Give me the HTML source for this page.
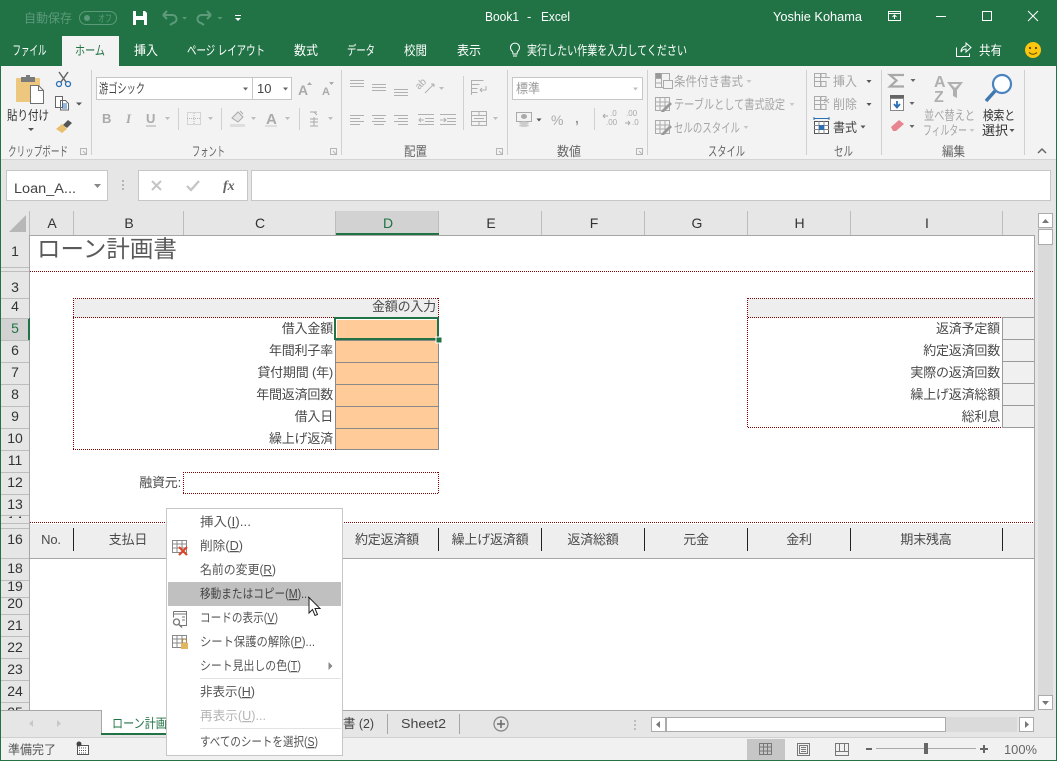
<!DOCTYPE html>
<html lang="ja"><head><meta charset="utf-8"><title>Book1 - Excel</title>
<style>
html,body{margin:0;padding:0;background:#e6e6e6;width:1057px;height:761px;overflow:hidden}
svg{display:block;font-family:"Liberation Sans","Noto Sans CJK JP",sans-serif}
text{white-space:pre}
.w{fill:#fff}.c{text-anchor:middle}.e{text-anchor:end}
.r{fill:#a6a6a6}
.h{font-size:14px;fill:#333;text-anchor:middle}
.s{font-size:13px;letter-spacing:-.2px;fill:#4a4a4a}
.m{font-size:12.500px;fill:#555}
.ar{fill:#8a8a8a}
.dot{stroke:#800000;stroke-dasharray:1 1;fill:none}
</style></head><body>
<svg width="1057" height="761" viewBox="0 0 1057 761" xmlns="http://www.w3.org/2000/svg">
<defs>
<clipPath id="c14"><rect x="1" y="516" width="28" height="2"/></clipPath>
<clipPath id="c25"><rect x="1" y="703" width="28" height="7"/></clipPath>
</defs>

<!-- base -->
<rect width="1057" height="761" fill="#e6e6e6"/>
<!-- title bar -->
<rect width="1057" height="66" fill="#217346"/>
<text x="24" y="22.500" font-size="12.500" fill="#5c9a79" textLength="48" lengthAdjust="spacingAndGlyphs">自動保存</text>
<rect x="79.500" y="11.500" width="37" height="13" rx="6.500" fill="none" stroke="#5c9a79"/>
<circle cx="87" cy="18" r="3" fill="#5c9a79"/>
<text x="98" y="22" font-size="10" fill="#5c9a79" textLength="14" lengthAdjust="spacingAndGlyphs">オフ</text>
<path d="M133 11h12l2 2v12h-14z" fill="#fff"/><rect x="136" y="11" width="7" height="5" fill="#217346"/><rect x="136" y="20" width="8" height="5" fill="#217346"/>
<path d="M163 15l4-4M163 15l4 4M163 15h9a4 4 0 0 1 1 8l-3 2" fill="none" stroke="#5c9a79" stroke-width="2"/>
<path d="M182 17h5l-2.500 2.500z" fill="#5c9a79"/>
<path d="M211 15l-4-4M211 15l-4 4M211 15h-9a4 4 0 0 0-1 8l3 2" fill="none" stroke="#5c9a79" stroke-width="2"/>
<path d="M217.500 17h5l-2.500 2.500z" fill="#5c9a79"/>
<rect x="235" y="15" width="6" height="1" fill="#fff"/><path d="M235 18h6l-3 3z" fill="#fff"/>
<text x="485" y="21" font-size="13" class="w" textLength="34" lengthAdjust="spacingAndGlyphs">Book1</text>
<text x="527" y="21" font-size="13" class="w">-</text>
<text x="541" y="21" font-size="13" class="w" textLength="29" lengthAdjust="spacingAndGlyphs">Excel</text>
<text x="773" y="21" font-size="13" class="w" textLength="89" lengthAdjust="spacingAndGlyphs">Yoshie Kohama</text>
<path d="M888.500 11.500h12v9h-12zM888.500 13.500h12M894.500 19v-4M892.500 17l2-2 2 2" fill="none" stroke="#fff"/>
<rect x="936" y="16" width="10" height="1" fill="#fff"/>
<rect x="982.500" y="11.500" width="9" height="9" fill="none" stroke="#fff"/>
<path d="M1028 11l10 10M1038 11l-10 10" stroke="#fff" fill="none"/>

<!-- tabs -->
<rect x="62" y="36" width="57" height="30" fill="#f3f3f3"/>
<g font-size="13" class="w">
<text x="12.500" y="55" textLength="34" lengthAdjust="spacingAndGlyphs">ファイル</text>
<text x="134" y="55" textLength="24" lengthAdjust="spacingAndGlyphs">挿入</text>
<text x="187" y="55" textLength="78" lengthAdjust="spacingAndGlyphs">ページ レイアウト</text>
<text x="294" y="55" textLength="24" lengthAdjust="spacingAndGlyphs">数式</text>
<text x="347" y="55" textLength="28" lengthAdjust="spacingAndGlyphs">データ</text>
<text x="404" y="55" textLength="23" lengthAdjust="spacingAndGlyphs">校閲</text>
<text x="457" y="55" textLength="24" lengthAdjust="spacingAndGlyphs">表示</text>
<text x="527" y="55" textLength="160" lengthAdjust="spacingAndGlyphs">実行したい作業を入力してください</text>
<text x="979" y="55" textLength="23" lengthAdjust="spacingAndGlyphs">共有</text>
</g>
<text x="75" y="55" font-size="13" fill="#217346" textLength="30" lengthAdjust="spacingAndGlyphs">ホーム</text>
<path d="M512 51a4.500 4.500 0 1 1 6 0c-1 1-1 2-1 3h-4c0-1 0-2-1-3zM513 56h4" fill="none" stroke="#fff"/>
<path d="M956.500 47.500v9h13v-3M961 52c0-4 3-6 5-6v-3l5 4.500-5 4.500v-3c-2 0-4 1-5 3z" fill="none" stroke="#fff"/>
<circle cx="1033" cy="50" r="8" fill="#fcc60e"/><circle cx="1030" cy="48" r="1.100" fill="#5a4a00"/><circle cx="1036" cy="48" r="1.100" fill="#5a4a00"/><path d="M1029 52.500q4 3.500 8 0" fill="none" stroke="#5a4a00"/>

<!-- ribbon -->
<rect x="1" y="66" width="1055" height="93" fill="#f3f3f3"/>
<rect x="1" y="159" width="1055" height="1" fill="#d4d4d4"/>
<g fill="#d0d0d0">
<rect x="91" y="70" width="1" height="85"/><rect x="341" y="70" width="1" height="85"/><rect x="507" y="70" width="1" height="85"/><rect x="647" y="70" width="1" height="85"/><rect x="806" y="70" width="1" height="85"/><rect x="881" y="70" width="1" height="85"/><rect x="1024" y="70" width="1" height="85"/>
<rect x="178" y="108" width="1" height="22"/><rect x="221" y="108" width="1" height="22"/><rect x="299" y="108" width="1" height="22"/><rect x="463" y="76" width="1" height="54"/><rect x="594" y="108" width="1" height="22"/>
</g>
<!-- group labels -->
<g font-size="13" fill="#666">
<text x="8" y="156" textLength="60" lengthAdjust="spacingAndGlyphs">クリップボード</text>
<text x="192" y="156" textLength="33" lengthAdjust="spacingAndGlyphs">フォント</text>
<text x="404" y="156" textLength="23" lengthAdjust="spacingAndGlyphs">配置</text>
<text x="557" y="156" textLength="24" lengthAdjust="spacingAndGlyphs">数値</text>
<text x="708" y="156" textLength="37" lengthAdjust="spacingAndGlyphs">スタイル</text>
<text x="834" y="156" textLength="19" lengthAdjust="spacingAndGlyphs">セル</text>
<text x="942" y="156" textLength="23" lengthAdjust="spacingAndGlyphs">編集</text>
</g>
<g fill="none" stroke="#b5b5b5"><path d="M80.500 154.500v-6h6v6zM83 151l3 3"/><path d="M330.500 154.500v-6h6v6zM333 151l3 3"/><path d="M496.500 154.500v-6h6v6zM499 151l3 3"/><path d="M636.500 154.500v-6h6v6zM639 151l3 3"/></g>
<path d="M1038 153l4-4 4 4" fill="none" stroke="#666" stroke-width="1.500"/>

<!-- clipboard -->
<rect x="16" y="78" width="24" height="24" rx="1" fill="#eec77f"/>
<rect x="21" y="77" width="14" height="5" fill="#7b7b7b"/><rect x="26" y="75" width="4" height="3" fill="#7b7b7b"/>
<path d="M30.500 85.500h8l5 5v13h-13z" fill="#fff" stroke="#707070"/>
<path d="M38.500 85.500v5h5" fill="none" stroke="#707070"/>
<text x="7" y="120" font-size="13" fill="#333" textLength="42" lengthAdjust="spacingAndGlyphs">貼り付け</text>
<path d="M28 128h6l-3 3z" fill="#555"/>
<path d="M59 72l7 10M68 72l-7 10" stroke="#666" stroke-width="1.500" fill="none"/>
<circle cx="59" cy="84" r="2.500" fill="none" stroke="#2c6fb5" stroke-width="1.300"/><circle cx="68" cy="84" r="2.500" fill="none" stroke="#2c6fb5" stroke-width="1.300"/>
<path d="M55.500 96.500h7v11h-7zM60.500 100.500h5l3 3v6.500h-8z" fill="#fff" stroke="#666"/>
<path d="M62 104h5M62 106h5M62 108h5" stroke="#2c6fb5"/>
<path d="M76 102.500h6l-3 3z" fill="#555"/>
<path d="M68 120l4 3-5 5-4-3z" fill="#555"/><path d="M62 124l5 5-5 4-6-4z" fill="#e8c070"/>

<!-- font -->
<rect x="96.500" y="77.500" width="195" height="22" fill="#fff" stroke="#c6c6c6"/>
<rect x="252" y="78" width="1" height="21" fill="#c6c6c6"/>
<text x="99" y="93" font-size="13" fill="#444" textLength="46" lengthAdjust="spacingAndGlyphs">游ゴシック</text>
<path d="M243 87.500h5l-2.500 3zM283 87.500h5l-2.500 3z" fill="#666"/>
<text x="257" y="93" font-size="13" fill="#444">10</text>
<g fill="#aaa" font-weight="bold">
<text x="298" y="95" font-size="14">A</text><text x="322" y="95" font-size="11">A</text>
<text x="102" y="123" font-size="13">B</text><text x="126" y="123" font-size="13" font-style="italic" font-family="Liberation Serif">I</text><text x="146" y="123" font-size="13">U</text>
<text x="266" y="124" font-size="15">A</text>
</g>
<path d="M307 85l2.500-3 2.500 3zM329 82h5l-2.500 3z" fill="#aaa"/>
<rect x="146" y="125.500" width="10" height="1" fill="#aaa"/>
<g style="fill:#bdbdbd"><path d="M165 117h5l-2.500 3zM208 117h5l-2.500 3zM251 117h5l-2.500 3zM285 117h5l-2.500 3zM328 117h5l-2.500 3zM439 87h5l-2.500 3zM493 117h5l-2.500 3z"/></g>
<rect x="187.500" y="112.500" width="13" height="12" fill="none" stroke="#b5b5b5" stroke-dasharray="1 1"/><path d="M194 113v12M187 118.500h13" stroke="#b5b5b5" stroke-dasharray="1 1"/>
<path d="M232 118l6-6 5 5-5 5zM240 111l3 3" fill="#e6e6e6" stroke="#aaa"/><rect x="230" y="124" width="15" height="3" fill="#dedede"/>
<rect x="265" y="125" width="12" height="2" fill="#dedede"/>
<path d="M310 112h7M314 112l3 3M310 119h8M314 117v9M310 122h8M310 126h8" fill="none" stroke="#aaa"/>

<!-- alignment -->
<g stroke="#b0b0b0" fill="none">
<path d="M350 80.500h14M350 83.500h14M350 86.500h14"/>
<path d="M372 84.500h14M372 87.500h14M372 90.500h14"/>
<path d="M394 89.500h14M394 92.500h14M394 95.500h14"/>
<path d="M425 93l9-9M434 84h-3M434 84v3"/>
<path d="M350 115.500h14M350 118.500h10M350 121.500h14M350 124.500h10"/>
<path d="M372 115.500h14M374 118.500h10M372 121.500h14M374 124.500h10"/>
<path d="M394 115.500h14M398 118.500h10M394 121.500h14M398 124.500h10"/>
<path d="M418 114.500h16M425 118.500h9M425 121.500h9M418 124.500h16M424 120h-5M421 118l-2 2 2 2"/>
<path d="M440 114.500h16M447 118.500h9M447 121.500h9M440 124.500h16M440 120h6M444 118l2 2-2 2"/>
<path d="M471.500 80.500h12M471.500 84.500h8M471.500 88.500h6M471.500 92.500h6M471.500 80v15M480 90h6v-4M480 90l2-2M480 90l2 2"/>
<path d="M471.500 111.500h15v14h-15zM471.500 115.500h15M471.500 121.500h15M479 111v4M479 121v4M474 118.500h10"/>
</g>
<text transform="translate(419 90) rotate(-45)" font-size="10" fill="#aaa">ab</text>

<!-- number -->
<rect x="512.500" y="77.500" width="130" height="22" fill="#fff" stroke="#c6c6c6"/>
<text x="516" y="93" font-size="13" fill="#999" textLength="24" lengthAdjust="spacingAndGlyphs">標準</text>
<path d="M633 87.500h5l-2.500 3z" fill="#c0c0c0"/>
<rect x="516.500" y="112.500" width="15" height="9" fill="none" stroke="#aaa"/><ellipse cx="524" cy="116.500" rx="3" ry="2.500" fill="#aaa"/><ellipse cx="524" cy="123" rx="5" ry="1.500" fill="#ccc"/><ellipse cx="524" cy="125.500" rx="5" ry="1.500" fill="#ccc"/>
<path d="M536.500 118.500h5l-2.500 3z" fill="#555"/>
<text x="551" y="125" font-size="14" fill="#aaa">%</text>
<text x="575" y="123" font-size="14" fill="#999" font-weight="bold">,</text>
<g font-size="8" fill="#aaa"><text x="610" y="116">.0</text><text x="606" y="125">.00</text><text x="626" y="116">.00</text><text x="632" y="125">.0</text></g>
<path d="M603 116h5M603 116l2-2M603 116l2 2M625 123h5M630 123l-2-2M630 123l-2 2" stroke="#aaa" fill="none"/>

<!-- styles -->
<g class="r" font-size="13">
<text x="674" y="86" textLength="69" lengthAdjust="spacingAndGlyphs">条件付き書式</text>
<text x="674" y="109" textLength="111" lengthAdjust="spacingAndGlyphs">テーブルとして書式設定</text>
<text x="674" y="132.500" textLength="66" lengthAdjust="spacingAndGlyphs">セルのスタイル</text>
<text x="833" y="86" textLength="24" lengthAdjust="spacingAndGlyphs">挿入</text>
<text x="833" y="109" textLength="24" lengthAdjust="spacingAndGlyphs">削除</text>
<text x="924" y="120" textLength="51" lengthAdjust="spacingAndGlyphs">並べ替えと</text>
<text x="923" y="135" textLength="44" lengthAdjust="spacingAndGlyphs">フィルター</text>
</g>
<path d="M746.500 80h5l-2.500 3zM789.500 103h5l-2.500 3zM743.500 126h5l-2.500 3zM969.500 129h5l-2.500 3z" fill="#c8c8c8"/>
<g stroke="#aaa" fill="none">
<path d="M655.500 73.500h14v14h-14zM655.500 78.500h6M655.500 83h6M661.500 73.500v14" /><rect x="663.500" y="80.500" width="9" height="8" fill="#f3f3f3"/>
<path d="M655.500 97.500h14v13h-14zM655.500 102h14M655.500 106h14M660 97.500v13M665 97.500v13"/>
<path d="M655.500 120.500h14v13h-14zM655.500 125h14M655.500 129h14M660 120.500v13M665 120.500v13"/>
</g>
<rect x="656" y="73" width="5" height="5" fill="#999"/>
<path d="M662 110l8-8 2 2-8 8h-3z" fill="#999"/><path d="M662 133l8-8 2 2-8 8h-3z" fill="#999"/>

<!-- cells -->
<g stroke="#aaa" fill="none">
<path d="M814.500 73.500h6v4h-6zM821 73.500h5v4h-5zM814.500 77.500h6v4h-6zM814.500 81.500h6v5h-6zM821 81.500h5v5h-5zM823 77.500h7"/>
<path d="M814.500 96.500h6v4h-6zM821 96.500h5v4h-5zM814.500 100.500h6v4h-6zM814.500 104.500h6v5h-6zM821 104.500h5v5h-5zM824 99l5 4M829 99l-5 4"/>
</g>
<path d="M866.500 80h5l-2.500 3zM866.500 103h5l-2.500 3zM860.500 125.500h5l-2.500 3z" fill="#555"/>
<path d="M814 118.500h15M814 117v3M829 117v3" stroke="#2c6fb5" fill="none"/>
<rect x="814.500" y="121.500" width="14" height="12" fill="#fff" stroke="#555"/><path d="M814 125.500h15M814 129.500h15M819 121v13M824 121v13" stroke="#888"/><rect x="819" y="125" width="5" height="5" fill="#2c6fb5"/>
<text x="833" y="132" font-size="13" fill="#444" textLength="24" lengthAdjust="spacingAndGlyphs">書式</text>

<!-- editing -->
<path d="M904 75h-14l6.500 5.500-6.500 6h14" fill="none" stroke="#a8a8a8" stroke-width="2.200"/>
<path d="M910.500 79h5l-2.500 3zM909.500 102h5l-2.500 3zM909.500 125h5l-2.500 3z" fill="#666"/>
<rect x="890" y="95" width="14" height="5" fill="#666"/><rect x="890.500" y="98.500" width="13" height="12" fill="#fff" stroke="#888"/><path d="M897 101v6M894 104l3 3.500 3-3.500" stroke="#2c6fb5" stroke-width="1.800" fill="none"/>
<path d="M891 127l8-7 5 4-8 7h-3z" fill="#e8848f"/>
<text x="934" y="87" font-size="16" font-weight="bold" fill="#b0b0b0">A</text><text x="934" y="102" font-size="16" font-weight="bold" fill="#b0b0b0">Z</text>
<path d="M947 82h16l-6 8v8l-4-2v-6z" fill="#b0b0b0"/><path d="M951 84h8l-4 4z" fill="#f3f3f3"/>
<circle cx="1002" cy="84" r="9" fill="#fff" stroke="#4a84c0" stroke-width="2.200"/>
<path d="M995 91l-9 10" stroke="#3f77b3" stroke-width="3.500" fill="none"/>
<text x="983" y="120" font-size="13" fill="#333" textLength="32" lengthAdjust="spacingAndGlyphs">検索と</text>
<text x="982" y="135" font-size="13" fill="#333" textLength="26" lengthAdjust="spacingAndGlyphs">選択</text>
<path d="M1009.500 129h5l-2.500 3z" fill="#555"/>

<!-- formula bar -->
<rect x="6.500" y="170.500" width="101" height="30" fill="#fff" stroke="#c6c6c6"/>
<text x="14" y="193" font-size="13.500" fill="#444" textLength="62" lengthAdjust="spacingAndGlyphs">Loan_A...</text>
<path d="M94 184h7l-3.500 4z" fill="#888"/>
<g fill="#b5b5b5"><rect x="122" y="180" width="2" height="2"/><rect x="122" y="184" width="2" height="2"/><rect x="122" y="188" width="2" height="2"/></g>
<rect x="138.500" y="170.500" width="109" height="30" fill="#fff" stroke="#c6c6c6"/>
<path d="M152 181l9 9M161 181l-9 9" stroke="#c4c4c4" stroke-width="2" fill="none"/>
<path d="M187 186l4 4 8-9" stroke="#c4c4c4" stroke-width="2.200" fill="none"/>
<text x="223" y="190" font-family="Liberation Serif" font-style="italic" font-weight="bold" font-size="14" fill="#666">fx</text>
<rect x="251.500" y="170.500" width="799" height="30" fill="#fff" stroke="#c6c6c6"/>

<!-- headers -->
<path d="M9 232h17v-17z" fill="#b7b7b7"/>
<rect x="336" y="211" width="103" height="22" fill="#d2d2d2"/>
<rect x="336" y="233" width="103" height="2" fill="#217346"/>
<g fill="#bdbdbd">
<rect x="73" y="211" width="1" height="24"/><rect x="183" y="211" width="1" height="24"/><rect x="335" y="211" width="1" height="24"/><rect x="438" y="211" width="1" height="22"/><rect x="541" y="211" width="1" height="24"/><rect x="644" y="211" width="1" height="24"/><rect x="747" y="211" width="1" height="24"/><rect x="850" y="211" width="1" height="24"/><rect x="1002" y="211" width="1" height="24"/><rect x="29" y="211" width="1" height="24"/>
</g>
<g class="h">
<text x="52" y="228">A</text><text x="129" y="228">B</text><text x="260" y="228">C</text><text x="388" y="228" fill="#217346">D</text><text x="491" y="228">E</text><text x="594" y="228">F</text><text x="697" y="228">G</text><text x="799.500" y="228">H</text><text x="927" y="228">I</text>
</g>

<!-- sheet -->
<rect x="30" y="235" width="1004" height="475" fill="#fff"/>
<rect x="29" y="235" width="1005" height="1" fill="#a6a6a6"/>
<rect x="1034" y="235" width="1" height="476" fill="#a6a6a6"/>
<rect x="29" y="235" width="1" height="475" fill="#a6a6a6"/>

<!-- row headers -->
<rect x="1" y="318" width="28" height="22" fill="#d2d2d2"/>
<rect x="28" y="318" width="2" height="22" fill="#217346"/>
<g fill="#bdbdbd">
<rect x="1" y="267" width="28" height="1"/><rect x="1" y="271" width="28" height="1"/><rect x="1" y="298" width="28" height="1"/><rect x="1" y="318" width="28" height="1"/><rect x="1" y="340" width="28" height="1"/><rect x="1" y="362" width="28" height="1"/><rect x="1" y="384" width="28" height="1"/><rect x="1" y="406" width="28" height="1"/><rect x="1" y="428" width="28" height="1"/><rect x="1" y="450" width="28" height="1"/><rect x="1" y="472" width="28" height="1"/><rect x="1" y="494" width="28" height="1"/><rect x="1" y="515" width="28" height="1"/><rect x="1" y="523" width="28" height="1"/><rect x="1" y="528" width="28" height="1"/><rect x="1" y="558" width="28" height="1"/><rect x="1" y="580" width="28" height="1"/><rect x="1" y="597" width="28" height="1"/><rect x="1" y="614" width="28" height="1"/><rect x="1" y="636" width="28" height="1"/><rect x="1" y="658" width="28" height="1"/><rect x="1" y="680" width="28" height="1"/><rect x="1" y="702" width="28" height="1"/>
</g>
<g class="h">
<text x="15" y="256">1</text><text x="15" y="292">3</text><text x="15" y="311">4</text><text x="15" y="333" fill="#217346">5</text><text x="15" y="355">6</text><text x="15" y="377">7</text><text x="15" y="399">8</text><text x="15" y="421">9</text><text x="15" y="443">10</text><text x="15" y="465">11</text><text x="15" y="487">12</text><text x="15" y="509">13</text>
<text x="15" y="526" clip-path="url(#c14)">14</text>
<text x="15" y="544">16</text><text x="15" y="573">18</text><text x="15" y="591">19</text><text x="15" y="608">20</text><text x="15" y="630">21</text><text x="15" y="652">22</text><text x="15" y="674">23</text><text x="15" y="696">24</text>
<text x="15" y="717" clip-path="url(#c25)">25</text>
</g>

<!-- title -->
<text x="37" y="257" font-size="23.500" fill="#5a5a5a">ローン計画書</text>
<path class="dot" d="M30 271.500H1034"/>

<!-- left block -->
<rect x="74" y="299" width="365" height="19" fill="#eeeeee"/>
<rect x="336" y="318" width="103" height="132" fill="#ffcc99"/>
<path d="M336 340.500h103M336 362.500h103M336 384.500h103M336 406.500h103M336 428.500h103M335.500 318v132M438.500 318v132" stroke="#8a8a8a" fill="none"/>
<path class="dot" d="M73 298.500H439M73 317.500H336M73.500 298V450M438.500 298V318M73 449.500H336"/>
<rect x="336" y="449" width="103" height="1" fill="#8a8a8a"/>
<g class="s e">
<text x="436" y="311">金額の入力</text>
<text x="333" y="333">借入金額</text><text x="333" y="355">年間利子率</text><text x="333" y="377">貸付期間 (年)</text><text x="333" y="399">年間返済回数</text><text x="333" y="421">借入日</text><text x="333" y="443">繰上げ返済</text>
<text x="181" y="487">融資元:</text>
</g>
<rect x="336.500" y="319.500" width="101" height="19" fill="#ffcc99" stroke="#fff"/>
<rect x="335" y="318" width="103" height="21" fill="none" stroke="#217346" stroke-width="2"/>
<rect x="436" y="337" width="6" height="6" fill="#217346" stroke="#fff"/>
<path class="dot" d="M183 472.500H439M183 493.500H439M183.500 472V494M438.500 472V494"/>

<!-- right block -->
<rect x="748" y="299" width="286" height="19" fill="#eeeeee"/>
<rect x="1002" y="318" width="32" height="110" fill="#f0f0f0"/>
<path d="M1002 317.500h32M1002 339.500h32M1002 361.500h32M1002 383.500h32M1002 405.500h32M1002 427.500h32M1002.500 318v110" stroke="#9a9a9a" fill="none"/>
<path class="dot" d="M748 298.500H1034M748 317.500H1002M747.500 298V428M748 427.500H1002"/>
<g class="s e">
<text x="1000" y="333">返済予定額</text><text x="1000" y="355">約定返済回数</text><text x="1000" y="377">実際の返済回数</text><text x="1000" y="399">繰上げ返済総額</text><text x="1000" y="421">総利息</text>
</g>

<!-- table header -->
<rect x="30" y="524" width="1004" height="34" fill="#eeeeee"/>
<path class="dot" d="M30 522.500H1034"/>
<rect x="30" y="558" width="1004" height="1" fill="#a6a6a6"/>
<path d="M73.500 528v23M183.500 528v23M438.500 528v23M541.500 528v23M644.500 528v23M747.500 528v23M850.500 528v23M1002.500 528v23" stroke="#222" fill="none"/>
<g class="s c">
<text x="51" y="544">No.</text><text x="128" y="544">支払日</text><text x="387" y="544">約定返済額</text><text x="490" y="544">繰上げ返済額</text><text x="593" y="544">返済総額</text><text x="696" y="544">元金</text><text x="799" y="544">金利</text><text x="926" y="544">期末残高</text>
</g>

<!-- scrollbars -->
<rect x="1038" y="213" width="15" height="497" fill="#dadada"/>
<rect x="1038.500" y="213.500" width="14" height="14" fill="#fff" stroke="#ababab"/><path d="M1042 223l3.500-4 3.500 4z" fill="#777"/>
<rect x="1038.500" y="229.500" width="14" height="15" fill="#fff" stroke="#ababab"/>
<rect x="1038.500" y="695.500" width="14" height="14" fill="#fff" stroke="#ababab"/><path d="M1042 701l3.500 4 3.500-4z" fill="#777"/>

<!-- tab bar -->
<rect x="1" y="710" width="1055" height="27" fill="#e6e6e6"/>
<rect x="1" y="710" width="1034" height="1" fill="#a6a6a6"/>
<path d="M33 720l-4 3.500 4 3.500zM57 720l4 3.500-4 3.500z" fill="#c8c8c8"/>
<rect x="101" y="710" width="80" height="24" fill="#fff"/><rect x="101" y="710" width="1" height="24" fill="#a6a6a6"/>
<rect x="101" y="733" width="80" height="2" fill="#217346"/>
<text x="112" y="728" font-size="13" fill="#217346" textLength="66" lengthAdjust="spacingAndGlyphs">ローン計画書</text>
<text x="343" y="728" font-size="13" fill="#444" textLength="31" lengthAdjust="spacingAndGlyphs">書 (2)</text>
<text x="401" y="728" font-size="13" fill="#444" textLength="45" lengthAdjust="spacingAndGlyphs">Sheet2</text>
<rect x="387" y="714" width="1" height="20" fill="#a6a6a6"/><rect x="459" y="714" width="1" height="20" fill="#a6a6a6"/>
<circle cx="501" cy="724" r="7" fill="none" stroke="#808080" stroke-width="1.200"/><path d="M497 724h8M501 720v8" stroke="#666" stroke-width="1.500"/>
<g fill="#bdbdbd"><rect x="634" y="720" width="2" height="2"/><rect x="634" y="724" width="2" height="2"/><rect x="634" y="728" width="2" height="2"/></g>
<rect x="666" y="717" width="351" height="15" fill="#dadada"/>
<rect x="651.500" y="717.500" width="14" height="14" fill="#fff" stroke="#ababab"/><path d="M660 721l-4 3.500 4 3.500z" fill="#777"/>
<rect x="666.500" y="717.500" width="279" height="14" fill="#fff" stroke="#ababab"/>
<rect x="1019.500" y="717.500" width="14" height="14" fill="#fff" stroke="#ababab"/><path d="M1025 721l4 3.500-4 3.500z" fill="#777"/>

<!-- status bar -->
<rect x="1" y="738" width="1055" height="22" fill="#f1f1f1"/>
<rect x="1" y="737" width="1055" height="1" fill="#d0d0d0"/>
<text x="8" y="754" font-size="12.500" fill="#555" textLength="48" lengthAdjust="spacingAndGlyphs">準備完了</text>
<rect x="77.500" y="745.500" width="11" height="9" fill="#fff" stroke="#555"/>
<circle cx="79" cy="744" r="2.500" fill="#444"/>
<path d="M79 748h8M79 750.500h8M79 753h8" stroke="#555" stroke-dasharray="1 1"/>
<rect x="747" y="739" width="38" height="21" fill="#c6c6c6"/>
<path d="M759.500 743.500h12v11h-12zM759.500 747h12M759.500 751h12M763.500 743.500v11M767.500 743.500v11" fill="none" stroke="#777"/>
<path d="M797.500 743.500h12v12h-12zM799.500 745.500h8v8h-8zM801 747.500h5M801 749.500h5M801 751.500h5" fill="none" stroke="#777"/>
<path d="M835.500 743.500h13v12h-13zM835.500 751.500h13M839.500 743.500v8M844.500 743.500v8" fill="none" stroke="#777"/>
<rect x="866" y="748" width="6" height="2" fill="#666"/>
<rect x="876" y="748" width="100" height="1" fill="#aaa"/>
<rect x="924" y="743" width="4" height="11" fill="#666"/>
<path d="M980 749h8M984 745v8" stroke="#666" stroke-width="2"/>
<text x="1004" y="754" font-size="13" fill="#666" textLength="33" lengthAdjust="spacingAndGlyphs">100%</text>

<!-- window border -->
<rect x="0" y="66" width="1" height="695" fill="#217346"/>
<rect x="1056" y="66" width="1" height="695" fill="#217346"/>
<rect x="0" y="760" width="1057" height="1" fill="#217346"/>

<!-- context menu -->
<rect x="166.500" y="508.500" width="176" height="247" fill="#fff" stroke="#c6c6c6"/>
<rect x="168" y="582" width="173" height="24" fill="#c0c0c0"/>
<rect x="200" y="678" width="141" height="1" fill="#e3e3e3"/><rect x="200" y="728" width="141" height="1" fill="#e3e3e3"/>
<g class="m">
<text x="200" y="526" textLength="51" lengthAdjust="spacingAndGlyphs">挿入(<tspan text-decoration="underline">I</tspan>)...</text>
<text x="200" y="550" textLength="43" lengthAdjust="spacingAndGlyphs">削除(<tspan text-decoration="underline">D</tspan>)</text>
<text x="200" y="574" textLength="76" lengthAdjust="spacingAndGlyphs">名前の変更(<tspan text-decoration="underline">R</tspan>)</text>
<text x="200" y="598" fill="#444" textLength="110" lengthAdjust="spacingAndGlyphs">移動またはコピー(<tspan text-decoration="underline">M</tspan>)...</text>
<text x="200" y="622" textLength="78" lengthAdjust="spacingAndGlyphs">コードの表示(<tspan text-decoration="underline">V</tspan>)</text>
<text x="200" y="646" textLength="115" lengthAdjust="spacingAndGlyphs">シート保護の解除(<tspan text-decoration="underline">P</tspan>)...</text>
<text x="200" y="670" textLength="101" lengthAdjust="spacingAndGlyphs">シート見出しの色(<tspan text-decoration="underline">T</tspan>)</text>
<text x="200" y="696" textLength="55" lengthAdjust="spacingAndGlyphs">非表示(<tspan text-decoration="underline">H</tspan>)</text>
<text x="200" y="720" fill="#b5b5b5" textLength="66" lengthAdjust="spacingAndGlyphs">再表示(<tspan text-decoration="underline">U</tspan>)...</text>
<text x="200" y="746" textLength="118" lengthAdjust="spacingAndGlyphs">すべてのシートを選択(<tspan text-decoration="underline">S</tspan>)</text>
</g>
<path d="M328.500 662l4 4-4 4z" fill="#888"/>
<path d="M172.500 540.500h14v12h-14zM172.500 544h14M172.500 548h14M177 540.500v12M182 540.500v12" fill="none" stroke="#888"/>
<path d="M179 547l8 8M187 547l-8 8" stroke="#d9472b" stroke-width="2.200" fill="none"/>
<path d="M173.500 611.500h13v14h-6M173.500 611.500v6M173.500 614h13M182 617h3M182 620h3" fill="none" stroke="#777"/>
<circle cx="176.500" cy="622" r="3" fill="#fff" stroke="#777" stroke-width="1.300"/><path d="M179 624.500l3 3" stroke="#777" stroke-width="1.500"/>
<path d="M172.500 635.500h14v12h-14zM172.500 639h14M172.500 643h14M177 635.500v12M182 635.500v12" fill="none" stroke="#888"/>
<path d="M182.500 643v-2a2 2 0 0 1 4 0v2" fill="none" stroke="#b08a3c"/>
<rect x="181" y="643" width="7" height="6" fill="#e2b65e"/>

<!-- cursor -->
<path d="M309 597.500v15.500l3.500-3.500 2.500 6 2.500-1-2.500-6h5z" fill="#fff" stroke="#222"/>
</svg>
</body></html>
